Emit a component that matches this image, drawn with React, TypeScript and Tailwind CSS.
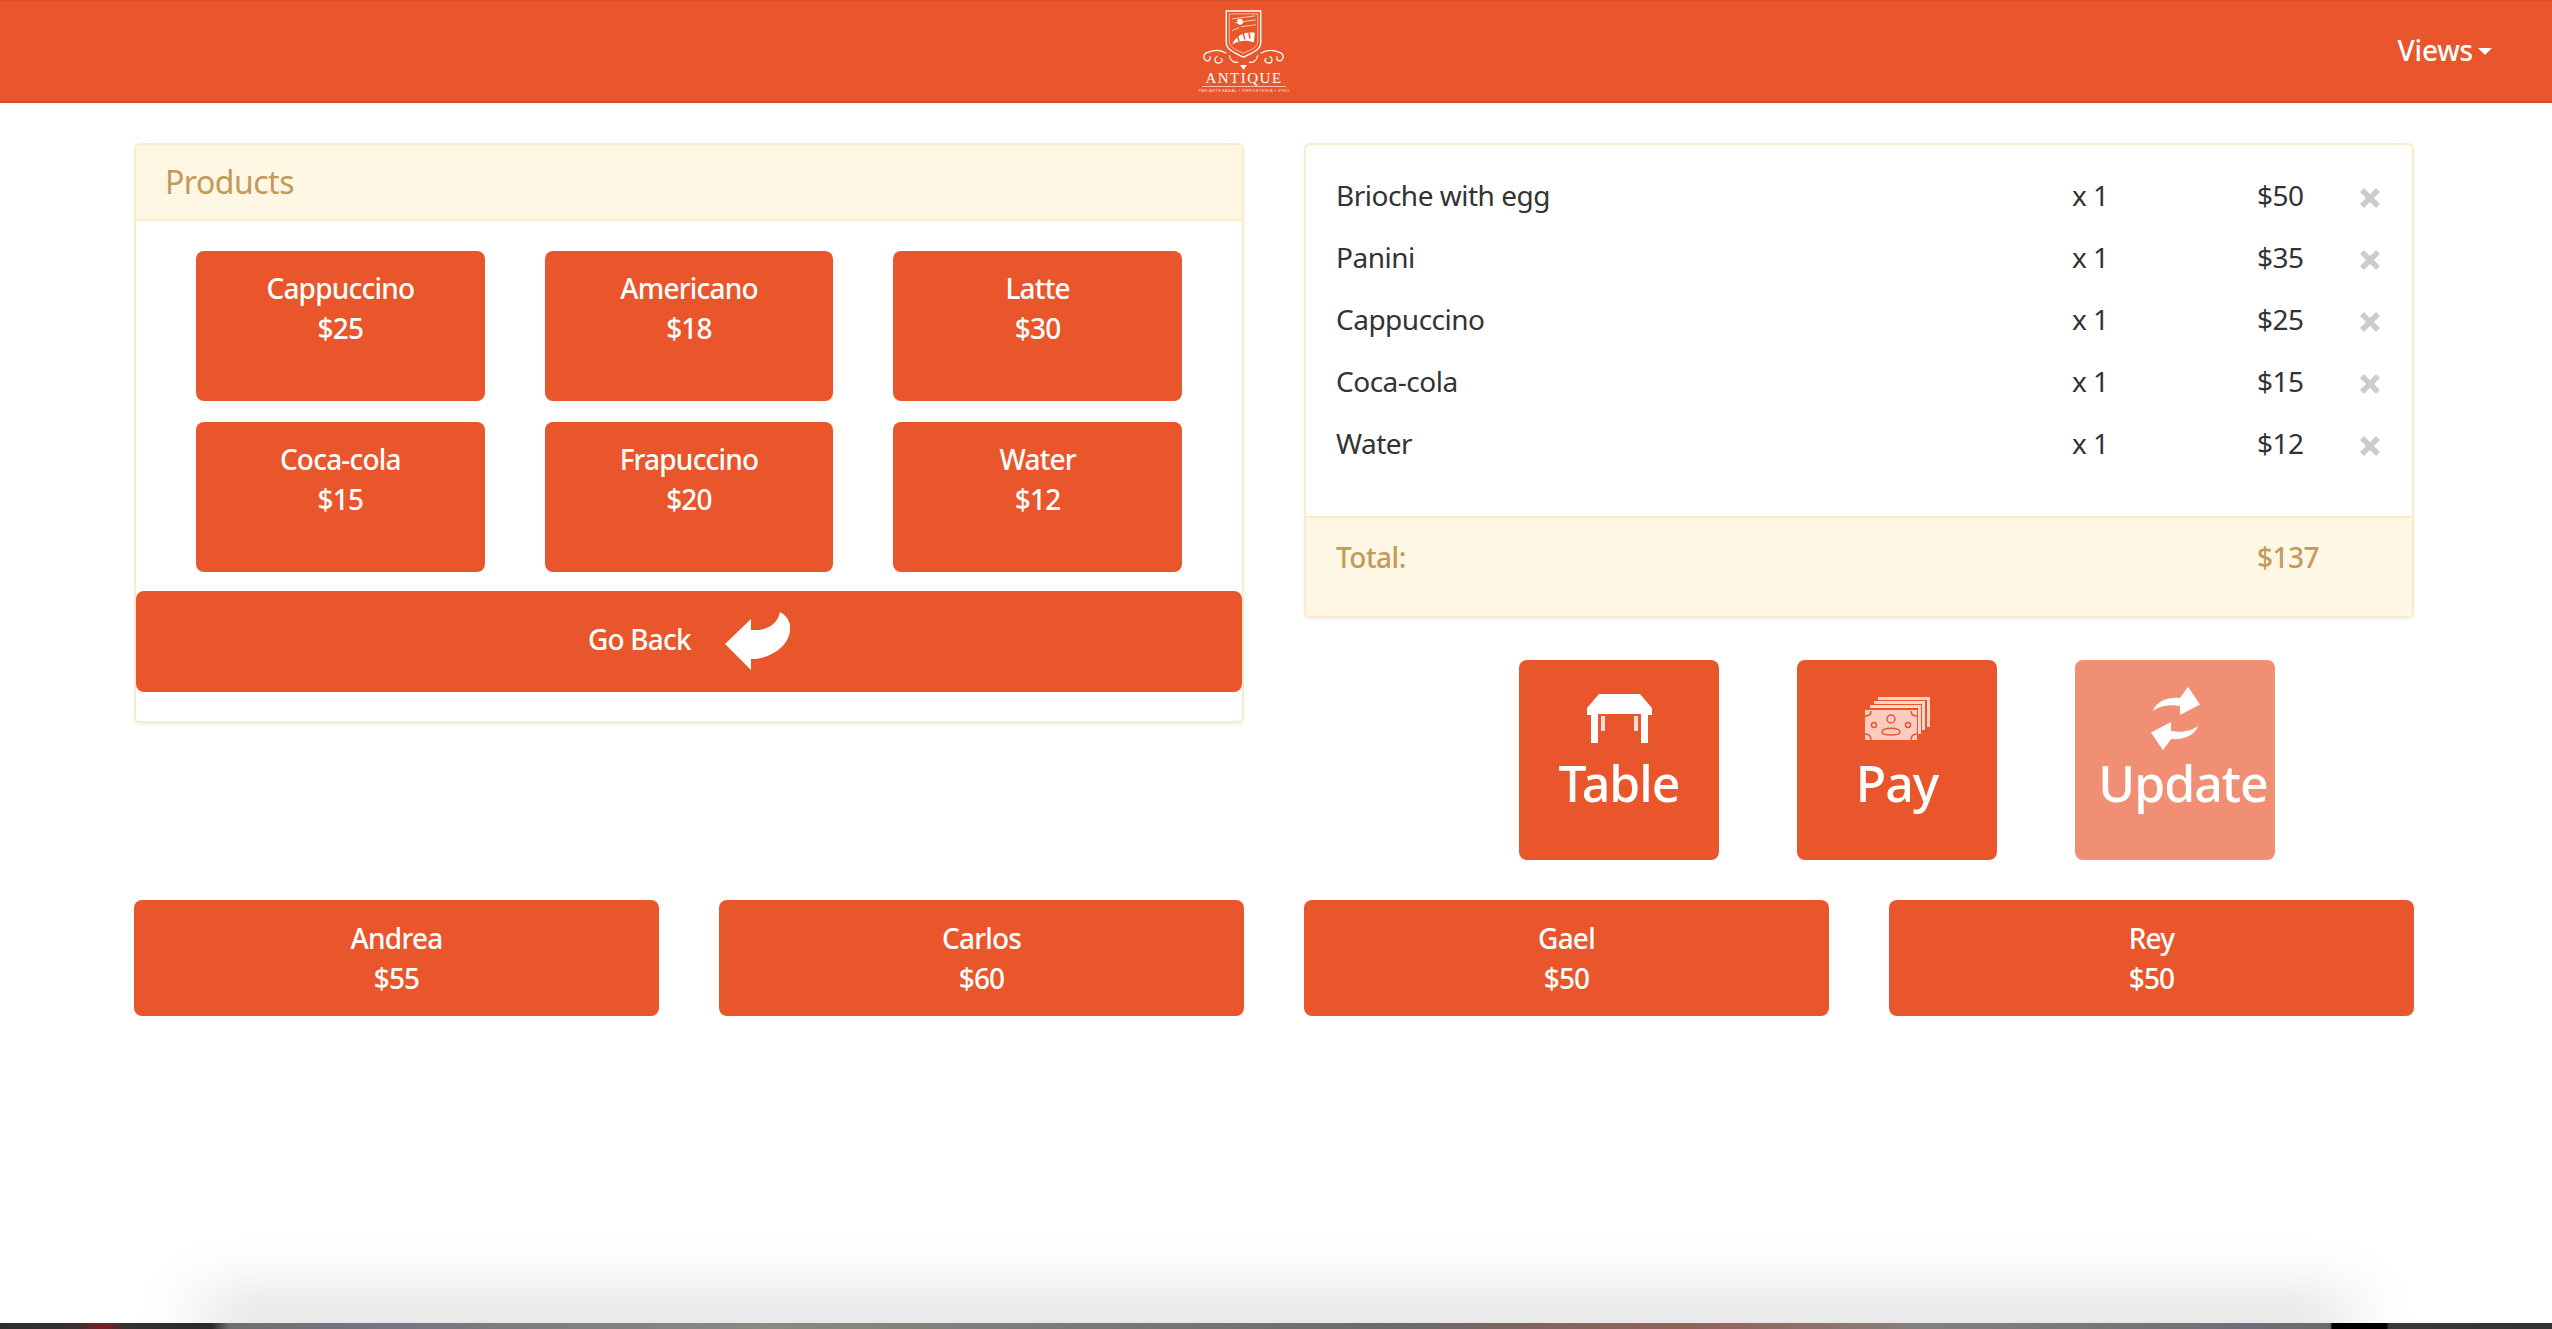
import React from "react";

const products = [
  { name: "Cappuccino", price: "$25" },
  { name: "Americano", price: "$18" },
  { name: "Latte", price: "$30" },
  { name: "Coca-cola", price: "$15" },
  { name: "Frapuccino", price: "$20" },
  { name: "Water", price: "$12" },
];

const orderItems = [
  { name: "Brioche with egg", price: "$50" },
  { name: "Panini", price: "$35" },
  { name: "Cappuccino", price: "$25" },
  { name: "Coca-cola", price: "$15" },
  { name: "Water", price: "$12" },
];

const waiters = [
  { name: "Andrea", total: "$55" },
  { name: "Carlos", total: "$60" },
  { name: "Gael", total: "$50" },
  { name: "Rey", total: "$50" },
];

function Logo() {
  return (
    <div className="mr-[64px] flex w-[90px] flex-col items-center text-white">
      <svg width="86" height="61" viewBox="2 1 86 62" fill="none" stroke="white">
        <path d="M27 2H62V34C62 42 52 45 44.500 49C37 45 27 42 27 34Z" strokeWidth="1.400" />
        <path d="M30 5H59V33C59 39 51 42 44.500 45C38 42 30 39 30 33Z" strokeWidth="0.600" />
        <path d="M33 10L56 7M36 14L57 11M42 18L57 16M33 22L40 19" strokeWidth="1" opacity="0.7" />
        <circle cx="41" cy="13" r="3" fill="white" stroke="none" />
        <path d="M33 36C38 25 47 23 56 24L55 34C48 31 40 32 33 36Z" fill="white" stroke="none" />
        <path d="M40 33L38 26M46 31L44 24M51 30L50 24" stroke="#e9562b" strokeWidth="1.500" />
        <path d="M27 45C21 41 13 42 8 44C4 45 3 50 6 52C9 54 12 51 10 48M62 45C68 41 76 42 81 44C85 45 86 50 83 52C80 54 77 51 79 48" strokeWidth="1.300" />
        <path d="M18 48C14 50 15 55 19 55C23 55 24 51 21 50M71 48C75 50 74 55 70 55C66 55 65 51 68 50M30 47C31 53 35 55 39 54M59 47C58 53 54 55 50 54" strokeWidth="1.200" />
        <path d="M41 57L44.500 62L48 57Z" fill="white" stroke="none" />
      </svg>
      <span className="font-['Liberation_Serif',serif] text-[15px] leading-[14px] tracking-[1.500px]">ANTIQUE</span>
      <div className="mt-[1px] h-[1px] w-[84px] bg-white/60" />
      <span className="mt-[1px] whitespace-nowrap font-['Liberation_Sans',sans-serif] text-[4px] leading-[5px] tracking-[0.500px] opacity-80">
        PAN ARTESANAL • REPOSTERÍA • VINO
      </span>
    </div>
  );
}

function Header() {
  return (
    <header className="relative flex h-[103px] shrink-0 items-center justify-center border-t border-b-2 border-t-[#d5502a] border-b-[#cf4c26] bg-[#e9562b]">
      <Logo />
      <div className="absolute right-[60px] top-[33px] flex items-center gap-[5px] text-[28px] font-medium leading-[32px] tracking-[-0.200px] text-white">
        Views
        <span className="mt-[3px] h-0 w-0 border-x-[7px] border-t-[7px] border-x-transparent border-t-white" />
      </div>
    </header>
  );
}

function ProductsPanel() {
  return (
    <section className="h-[580px] rounded-[6px] border-2 border-[#faebcc] bg-white shadow-[0_2px_3px_rgba(0,0,0,0.05)]">
      <div className="flex h-[76px] items-center rounded-t-[4px] border-b-2 border-[#faebcc] bg-[#fdf7e3] pl-[29px] text-[32px] tracking-[-0.500px] text-[#c49a5a]">
        Products
      </div>
      <div className="grid grid-cols-3 gap-x-[60px] gap-y-[21px] px-[60px] pt-[30px]">
        {products.map((p) => (
          <button key={p.name} className="flex h-[150px] flex-col items-center rounded-[8px] bg-[#e9562b] pt-[17px] text-[28px] font-medium leading-[40px] tracking-[-0.800px] text-white">
            <span>{p.name}</span>
            <span>{p.price}</span>
          </button>
        ))}
      </div>
      <button className="mx-auto mt-[19px] flex h-[101px] w-[1106px] items-center rounded-[8px] bg-[#e9562b] pl-[452px] text-[28px] font-medium tracking-[-0.800px] text-white">
        <span className="mb-[5px]">Go Back</span>
        <svg className="mb-[2px] ml-[34px]" width="65" height="58" viewBox="0 0 65 58" fill="white">
          <path d="M0 32L26 7V18C40 19 52 14 55 0C62 4 66 10 65 18C64 34 46 47 26 47V58Z" />
        </svg>
      </button>
    </section>
  );
}

function RemoveIcon() {
  return (
    <svg className="mt-[6px]" width="20" height="20" viewBox="0 0 20 20" stroke="#cccccc" strokeWidth="5.500">
      <path d="M2 2L18 18M18 2L2 18" />
    </svg>
  );
}

function OrderPanel() {
  return (
    <section className="h-[475px] overflow-hidden rounded-[6px] border-2 border-[#faebcc] bg-white text-[28px] tracking-[-0.500px] shadow-[0_2px_3px_rgba(0,0,0,0.05)]">
      <div className="h-[371px] pl-[30px] pt-[19px] text-[#333333]">
        {orderItems.map((item) => (
          <div key={item.name} className="flex h-[62px] items-center">
            <span className="w-[736px]">{item.name}</span>
            <span className="w-[185px]">x 1</span>
            <span className="w-[103px]">{item.price}</span>
            <RemoveIcon />
          </div>
        ))}
      </div>
      <div className="flex h-[100px] border-t-2 border-[#faebcc] bg-[#fdf7e3] pl-[30px] pt-[18px] font-medium text-[#c49a5a]">
        <span className="w-[921px]">Total:</span>
        <span>$137</span>
      </div>
    </section>
  );
}

function TableIcon() {
  return (
    <svg width="65" height="49" viewBox="0 0 65 49" fill="white">
      <path d="M12 0H53L65 14V21H61V49H54V20H11V49H4V21H0V14Z" />
      <rect x="14" y="22" width="4" height="15" opacity="0.8" />
      <rect x="47" y="22" width="4" height="15" opacity="0.8" />
    </svg>
  );
}

function MoneyIcon() {
  return (
    <svg width="65" height="43" viewBox="0 0 65 43">
      <path d="M13 0H65V30H62V3H13Z" fill="white" opacity="0.75" />
      <path d="M9 4H60V33H57V7H9Z" fill="white" opacity="0.75" />
      <path d="M5 8H56V37H53V11H5Z" fill="white" opacity="0.75" />
      <rect x="0" y="13" width="52" height="30" fill="white" opacity="0.7" />
      <g fill="none" stroke="#e9562b" strokeWidth="1.500">
        <circle cx="26" cy="22" r="4" />
        <path d="M17 35C17 30 35 30 35 35C35 39 17 39 17 35Z" />
        <circle cx="9" cy="28" r="2.500" />
        <circle cx="43" cy="28" r="2.500" />
        <path d="M0 19C4 19 6 17 6 14M52 19C48 19 46 17 46 14M0 37C4 37 6 39 6 43M52 37C48 37 46 39 46 43" />
      </g>
    </svg>
  );
}

function RefreshIcon() {
  return (
    <svg width="49" height="65" viewBox="0 0 49 65" fill="white">
      <path d="M1.500 25.500C6 15 16 11 29 12L37 0.700L49 18.600L29 29V20C18 18 8 20 1.500 25.500Z" />
      <path d="M47.500 39.500C43 50 33 54 20 53L12 64.300L0 46.400L20 36V45C31 47 41 45 47.500 39.500Z" />
    </svg>
  );
}

function ActionButton({ label, icon, faded }: { label: string; icon: React.ReactNode; faded?: boolean }) {
  return (
    <button className={`flex h-[200px] w-[200px] flex-col items-center rounded-[8px] pt-[23px] text-white ${faded ? "bg-[#f18f75]" : "bg-[#e9562b]"}`}>
      <span className="flex h-[70px] items-center">{icon}</span>
      <span className={`whitespace-nowrap text-[50px] font-medium leading-[60px] tracking-[-1px] ${faded ? "ml-[16px]" : ""}`}>{label}</span>
    </button>
  );
}

export default function App() {
  return (
    <div className="flex h-[1329px] flex-col overflow-hidden bg-white font-['Noto_Sans',sans-serif]">
      <Header />
      <main className="grid grid-cols-2 gap-x-[60px] px-[134px] pr-[138px] pt-[40px]">
        <ProductsPanel />
        <div className="h-[716px]">
          <OrderPanel />
          <div className="mt-[42px] flex gap-[78px] pl-[215px]">
            <ActionButton label="Table" icon={<TableIcon />} />
            <ActionButton label="Pay" icon={<MoneyIcon />} />
            <ActionButton label="Update" icon={<RefreshIcon />} faded />
          </div>
        </div>
        {/* waiter totals */}
        <div className="col-span-2 mt-[41px] grid grid-cols-4 gap-x-[60px]">
          {waiters.map((w) => (
            <button key={w.name} className="flex h-[116px] flex-col items-center justify-center rounded-[8px] bg-[#e9562b] pb-[1px] text-[28px] font-medium leading-[40px] tracking-[-0.800px] text-white">
              <span>{w.name}</span>
              <span>{w.total}</span>
            </button>
          ))}
        </div>
      </main>
      {/* bit of the desktop showing under the window */}
      <div className="mt-auto flex h-[6px] shrink-0 bg-[linear-gradient(90deg,#2e2e2e_0%,#3a3030_3%,#7a1f25_4%,#333_5%,#2c2c2c_8.300%,#6f6f6f_9%,#70757f_14%,#8a8a82_30%,#6a6a68_55%,#96605a_66%,#85807c_75%,#6f6e78_88%,#6a6a6a_91.300%,#000_91.400%,#000_93.500%,#3a3a3a_93.600%,#333_100%)]">
        <div className="mx-[212px] h-full w-full shadow-[0_-2px_70px_10px_rgba(0,0,0,0.3)]" />
      </div>
    </div>
  );
}
